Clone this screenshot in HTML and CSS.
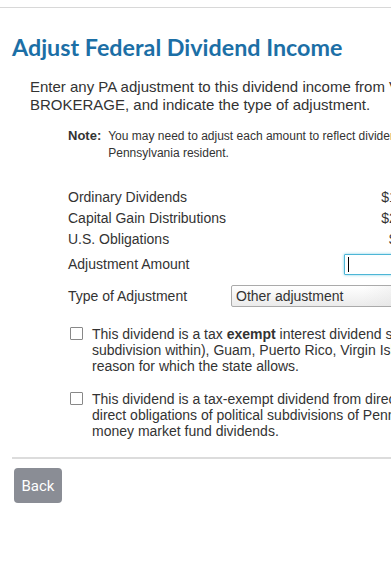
FILE: index.html
```html
<!DOCTYPE html>
<html lang="en">

<head>
    <meta charset="UTF-8">
    <meta name="viewport" content="width=device-width, initial-scale=1.0">
    <title>Adjust Federal Dividend Income</title>
    <link rel="stylesheet" href="styles.css">
</head>

<body>
    <div class="topbar"></div>

    <div class="page">
        <h1 class="title">Adjust Federal Dividend Income</h1>

        <p class="intro">
            Enter any PA adjustment to this dividend income from VANGUARD<br>
            BROKERAGE, and indicate the type of adjustment.
        </p>

        <div class="note">
            <span class="note-label">Note:</span>
            <span class="note-text">You may need to adjust each amount to reflect dividends that are not taxable to you as a<br>
                Pennsylvania resident.</span>
        </div>

        <div class="amounts">
            <div class="amount-row">
                <span>Ordinary Dividends</span>
                <span class="value">$12.48</span>
            </div>
            <div class="amount-row">
                <span>Capital Gain Distributions</span>
                <span class="value">$23.06</span>
            </div>
            <div class="amount-row">
                <span>U.S. Obligations</span>
                <span class="value">$5.12</span>
            </div>
            <div class="amount-row adjust-row">
                <span>Adjustment Amount</span>
                <span class="input-wrap">
                    <input type="text" class="amount-input">
                    <span class="caret"></span>
                </span>
            </div>
        </div>

        <div class="type-row">
            <span class="type-label">Type of Adjustment</span>
            <select class="type-select">
                <option>Other adjustment</option>
                <option>Federal obligation interest</option>
            </select>
        </div>

        <!-- exemption checkboxes -->
        <label class="check">
            <input type="checkbox">
            <span>This dividend is a tax <b>exempt</b> interest dividend sourced from U.S. obligations (or any political<br>
                subdivision within), Guam, Puerto Rico, Virgin Islands or American Samoa, or for any other<br>
                reason for which the state allows.</span>
        </label>

        <label class="check">
            <input type="checkbox">
            <span>This dividend is a tax-exempt dividend from direct obligations of the Commonwealth of Pennsylvania or<br>
                direct obligations of political subdivisions of Pennsylvania. Do not include Pennsylvania exempt<br>
                money market fund dividends.</span>
        </label>

        <hr class="divider">

        <button class="back-btn">Back</button>
    </div>
</body>

</html>
```

FILE: styles.css
```css
html,
body {
    margin: 0;
    overflow: hidden;
    background-color: #fff;
}

body {
    font-family: Arial, "Liberation Sans", sans-serif;
    color: #333;
}

.topbar {
    height: 7px;
    border-bottom: 1px solid #d8d8d8;
}

.page {
    width: 760px;
    padding-left: 12px;
}

.title {
    margin: 25px 0 0 0;
    font-family: Lato, "Open Sans", sans-serif;
    font-size: 23.3px;
    line-height: 28px;
    font-weight: bold;
    color: #1c6fa6;
}

.intro {
    margin: 17px 0 0 18px;
    font-size: 15px;
    line-height: 18px;
}

.note {
    display: flex;
    align-items: baseline;
    margin: 13px 0 0 56px;
    line-height: 17px;
}

.note-label {
    font-size: 13px;
    font-weight: bold;
    margin-right: 7px;
}

.note-text {
    font-size: 12px;
}

.amounts {
    margin: 25px 0 0 56px;
    width: 356px;
    font-size: 14px;
    line-height: 21px;
}

.amount-row {
    display: flex;
    justify-content: space-between;
    align-items: center;
}

.adjust-row {
    margin-top: 4px;
}

.input-wrap {
    position: relative;
    display: block;
}

.amount-input {
    display: block;
    box-sizing: border-box;
    width: 80px;
    height: 21px;
    margin: 0;
    border: 1px solid #4db6d6;
    border-radius: 1px;
    box-shadow: 0 0 3px #7fd0e6;
    outline: none;
}

.caret {
    position: absolute;
    left: 4px;
    top: 3px;
    width: 1px;
    height: 15px;
    background-color: #000;
}

.type-row {
    display: flex;
    align-items: center;
    margin: 10px 0 0 56px;
    font-size: 14px;
    line-height: 21px;
}

.type-label {
    width: 163px;
}

.type-select {
    appearance: none;
    -webkit-appearance: none;
    box-sizing: border-box;
    width: 240px;
    height: 22px;
    margin: 0;
    padding: 0 4px;
    font-family: Arial, "Liberation Sans", sans-serif;
    font-size: 14px;
    color: #333;
    border: 1px solid #aaa;
    border-radius: 2px;
    background: linear-gradient(to right, rgba(255, 255, 255, 0) 55%, #ddd), linear-gradient(#fff, #ebebeb);
}

.check {
    display: flex;
    align-items: flex-start;
    margin: 19px 0 0 58px;
    font-size: 14px;
    line-height: 16px;
}

.check + .check {
    margin-top: 17px;
}

.check input {
    appearance: none;
    -webkit-appearance: none;
    flex: none;
    width: 13px;
    height: 13px;
    margin: 1px 9px 0 0;
    border: 1px solid #888;
    border-radius: 1px;
    background-color: #fff;
}

.divider {
    margin: 18px 0 0 0;
    height: 0;
    border: none;
    border-top: 2px solid #dcdcdc;
}

.back-btn {
    margin: 9px 0 0 2px;
    width: 48px;
    height: 35px;
    padding: 0;
    border: none;
    border-radius: 4px;
    background-color: #8a8d95;
    color: #fff;
    font-family: Roboto, sans-serif;
    font-size: 15px;
}
```
